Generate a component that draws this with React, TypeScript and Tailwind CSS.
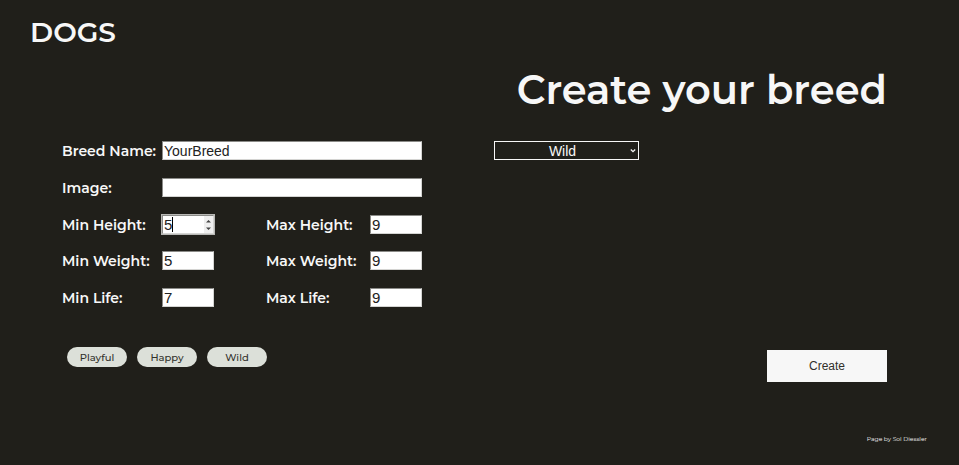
import type { ReactNode } from "react";

const temperaments = ["Playful", "Happy", "Wild"];

const inputClass =
  "block h-[19px] w-full appearance-none border border-[#d4d4d2] border-t-[#8b8b88] border-l-[#8b8b88] bg-white px-px font-['Liberation_Sans',Arial,sans-serif] leading-4 text-[#222222] outline-none [appearance:textfield] [&::-webkit-inner-spin-button]:appearance-none";

function Label({ id, children }: { id: string; children: ReactNode }) {
  return (
    <label htmlFor={id} className="block text-sm leading-5 font-semibold whitespace-nowrap">
      {children}
    </label>
  );
}

function NumberPair({ name, min, max, active = false }: { name: string; min: number; max: number; active?: boolean }) {
  const key = name.toLowerCase();
  return (
    <>
      <Label id={`min-${key}`}>Min {name}:</Label>
      <div className="relative">
        <input
          id={`min-${key}`}
          type="number"
          defaultValue={min}
          className={
            active
              ? `${inputClass} border-[#55554f] text-[15px] ring-1 ring-[#b8b8b5]`
              : `${inputClass} text-[15px]`
          }
        />
        {active && (
          <>
            <span className="absolute top-0.5 left-[10px] h-[15px] w-px bg-black" />
            <span className="absolute top-px right-px flex h-[17px] w-[9px] items-center justify-center bg-[#efefef]">
              <svg viewBox="0 0 9 17" className="h-[17px] w-[9px]" fill="#444444" aria-hidden="true">
                <path d="M2 6.5 4.5 4 7 6.5ZM2 11.5h5L4.5 14Z" />
              </svg>
            </span>
          </>
        )}
      </div>
      <div className="w-[104px] justify-self-end">
        <Label id={`max-${key}`}>Max {name}:</Label>
      </div>
      <input id={`max-${key}`} type="number" defaultValue={max} className={`${inputClass} text-[15px]`} />
    </>
  );
}

export default function App() {
  return (
    <div className="flex min-h-screen flex-col bg-[#201f1a] font-['Montserrat','Inter',sans-serif] text-[#f7f7f7]">
      <header className="px-[30px] pt-4">
        <a href="#" className="block text-[28px] leading-8 font-semibold">
          DOGS
        </a>
      </header>
      <main className="flex-1 pr-[72px] pl-[62px]">
        <h1 className="pt-4 text-right text-[40px] leading-[52px] font-semibold">Create your breed</h1>
        <form className="grid grid-cols-[360px_1fr] gap-x-[72px] pt-[25px]">
          <div>
            <div className="grid h-[166px] grid-cols-[100px_52px_1fr_52px] grid-rows-[repeat(5,19px)] content-between">
              <Label id="breed">Breed Name:</Label>
              <div className="col-span-3">
                <input id="breed" type="text" defaultValue="YourBreed" className={`${inputClass} text-sm`} />
              </div>
              <Label id="image">Image:</Label>
              <div className="col-span-3">
                <input id="image" type="text" className={`${inputClass} text-sm`} />
              </div>
              <NumberPair name="Height" min={5} max={9} active />
              <NumberPair name="Weight" min={5} max={9} />
              <NumberPair name="Life" min={7} max={9} />
            </div>
            <div className="mt-10 ml-[5px] flex gap-[10px]">
              {temperaments.map((name) => (
                <button
                  key={name}
                  type="button"
                  className="h-5 w-[60px] rounded-full bg-[#dce0d9] text-[10px] font-medium text-[#31302b]"
                >
                  {name}
                </button>
              ))}
            </div>
          </div>
          <div className="flex flex-col justify-between">
            <div className="relative w-[145px]">
              <select
                aria-label="Temperament"
                defaultValue="Wild"
                className="block h-[19px] w-full appearance-none border border-[#f7f7f7] bg-[#201f1a] pr-2 text-center font-['Liberation_Sans',Arial,sans-serif] text-sm leading-4 text-[#f7f7f7]"
              >
                {temperaments.map((name) => (
                  <option key={name}>{name}</option>
                ))}
              </select>
              <svg
                viewBox="0 0 6 6"
                className="pointer-events-none absolute top-[7px] right-[3px] size-1.5"
                fill="none"
                stroke="#f7f7f7"
                strokeWidth="1.3"
                aria-hidden="true"
              >
                <path d="m.8 1.5 2.2 2.2 2.2-2.2" />
              </svg>
            </div>
            <button
              type="submit"
              className="-mb-[15px] h-8 w-[120px] self-end bg-[#f7f7f7] font-['Liberation_Sans',Arial,sans-serif] text-xs text-[#31302b]"
            >
              Create
            </button>
          </div>
        </form>
      </main>
      <footer className="px-8 pb-5 text-right text-[6px] leading-3">Page by Sol Diessler</footer>
    </div>
  );
}
